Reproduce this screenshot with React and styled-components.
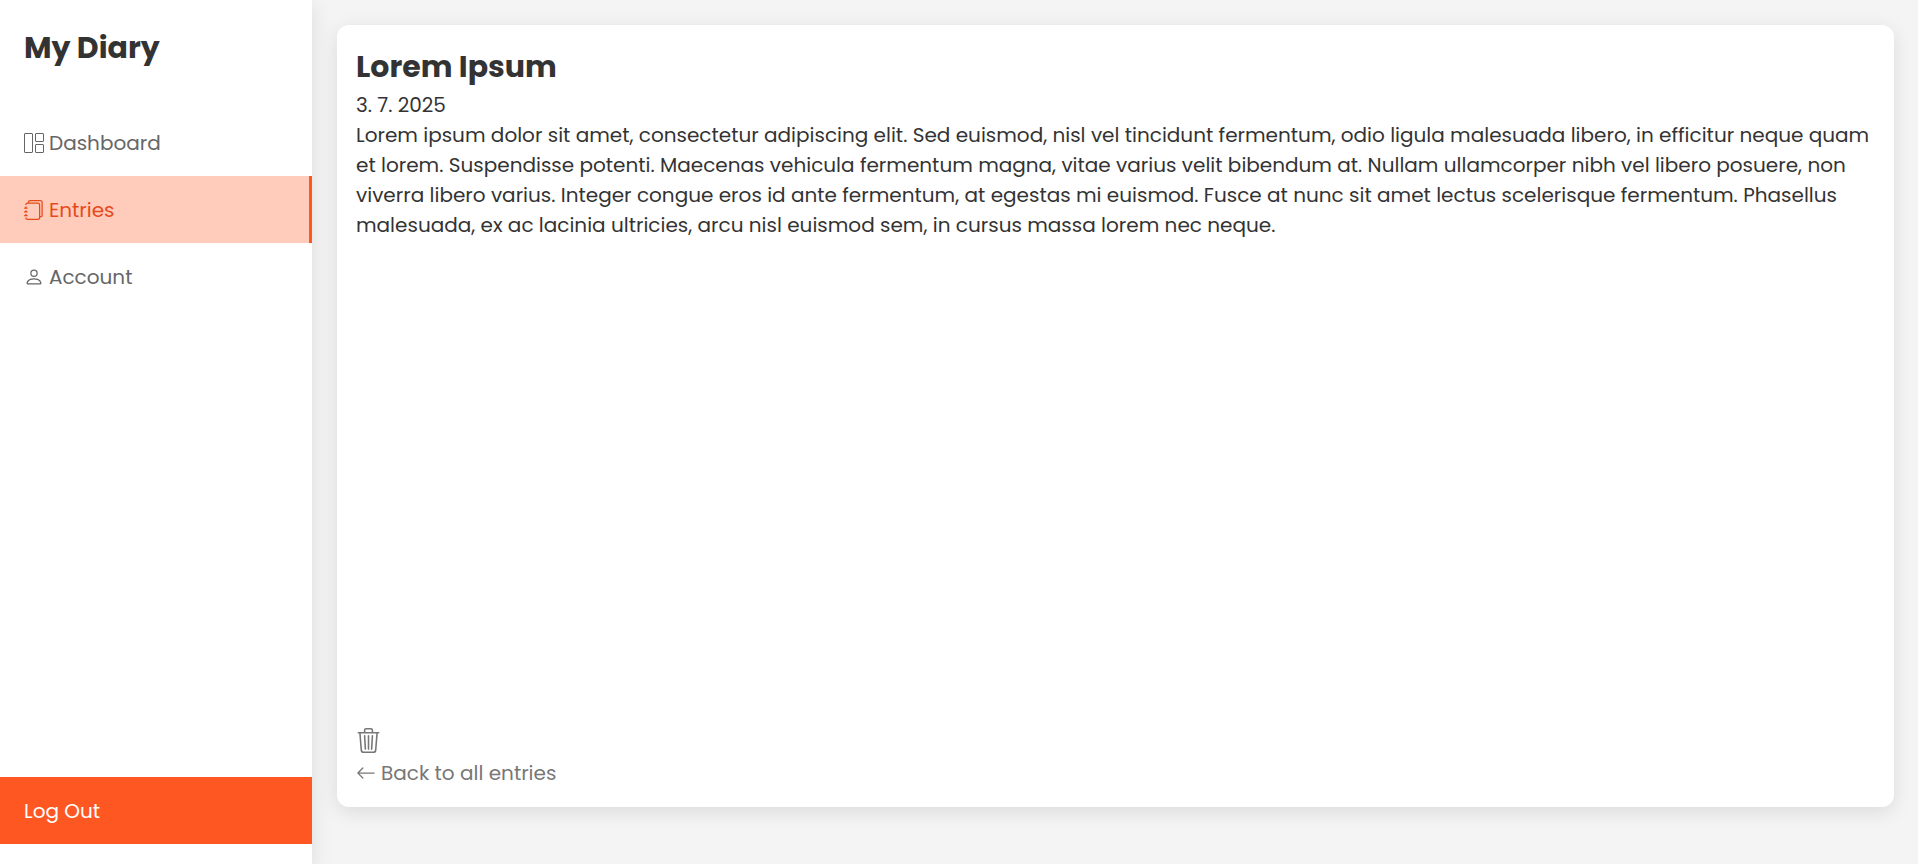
import React from "react";
import styled, { createGlobalStyle } from "styled-components";
import { BsJournals, BsPerson, BsTrash3, BsArrowLeft } from "react-icons/bs";

const GlobalStyle = createGlobalStyle`
  * { box-sizing: border-box; margin: 0; padding: 0; }
  body {
    background: #f4f4f4;
    color: #333;
    font-family: Poppins, Inter, "Liberation Sans", sans-serif;
    font-size: 20px;
    line-height: 30px;
  }
`;

const Page = styled.div`
  display: flex;
  min-height: 100vh;
`;

const Sidebar = styled.aside`
  display: flex;
  flex-direction: column;
  flex: 0 0 312px;
  padding: 25px 0 20px;
  background: #fff;
  box-shadow: 0 5px 20px rgba(0, 0, 0, 0.1);
`;

const Brand = styled.h1`
  padding: 0 24px;
  margin-bottom: 38px;
  font-size: 30px;
  line-height: 46px;
  font-weight: 700;
`;

const Nav = styled.nav`
  display: flex;
  flex-direction: column;
`;

const NavLink = styled.a`
  display: flex;
  align-items: center;
  gap: 5px;
  height: 67px;
  padding: 0 24px;
  color: ${(p) => (p.$active ? "#e64a19" : "#666")};
  background: ${(p) => (p.$active ? "#ffccbc" : "transparent")};
  border-right: 3px solid ${(p) => (p.$active ? "#ff5722" : "transparent")};
  text-decoration: none;
`;

const LogOut = styled.button`
  height: 67px;
  margin-top: auto;
  padding: 0 24px;
  border: 0;
  background: #ff5722;
  color: #fff;
  font: inherit;
  text-align: left;
  cursor: pointer;
`;

const Main = styled.main`
  display: flex;
  flex: 1;
  min-width: 0;
  padding: 25px 24px 57px 25px;
`;

const Card = styled.article`
  display: flex;
  flex-direction: column;
  flex: 1;
  padding: 19px;
  border-radius: 12px;
  background: #fff;
  box-shadow: 0 5px 20px rgba(0, 0, 0, 0.1);
`;

const Title = styled.h2`
  font-size: 30px;
  line-height: 46px;
  font-weight: 700;
`;

const Actions = styled.footer`
  display: flex;
  flex-direction: column;
  align-items: flex-start;
  gap: 5px;
  margin-top: auto;
  color: #777;
`;

const DeleteButton = styled.button`
  display: flex;
  border: 0;
  background: none;
  color: inherit;
  cursor: pointer;
`;

const BackLink = styled.a`
  display: flex;
  align-items: center;
  gap: 5px;
  color: inherit;
  text-decoration: none;
`;

const DashboardIcon = () => (
  <svg width="20" height="20" viewBox="0 0 20 20" fill="none" stroke="currentColor" aria-hidden="true">
    <rect x="0.5" y="0.5" width="8" height="19" rx="0.5" />
    <rect x="11.5" y="0.5" width="8" height="8" rx="0.5" />
    <rect x="11.5" y="11.5" width="8" height="8" rx="0.5" />
  </svg>
);

const items = [
  { label: "Dashboard", icon: <DashboardIcon /> },
  { label: "Entries", icon: <BsJournals size={20} />, active: true },
  { label: "Account", icon: <BsPerson size={20} /> },
];

export default function App() {
  return (
    <>
      <GlobalStyle />
      <Page>
        <Sidebar>
          <Brand>My Diary</Brand>
          <Nav>
            {items.map((item) => (
              <NavLink key={item.label} href="#" $active={item.active} aria-current={item.active ? "page" : undefined}>
                {item.icon}
                {item.label}
              </NavLink>
            ))}
          </Nav>
          <LogOut type="button">Log Out</LogOut>
        </Sidebar>
        <Main>
          <Card>
            <Title>Lorem Ipsum</Title>
            <time dateTime="2025-07-03">3. 7. 2025</time>
            <p>
              Lorem ipsum dolor sit amet, consectetur adipiscing elit. Sed euismod, nisl vel tincidunt fermentum, odio
              ligula malesuada libero, in efficitur neque quam et lorem. Suspendisse potenti. Maecenas vehicula
              fermentum magna, vitae varius velit bibendum at. Nullam ullamcorper nibh vel libero posuere, non viverra
              libero varius. Integer congue eros id ante fermentum, at egestas mi euismod. Fusce at nunc sit amet
              lectus scelerisque fermentum. Phasellus malesuada, ex ac lacinia ultricies, arcu nisl euismod sem, in
              cursus massa lorem nec neque.
            </p>
            <Actions>
              <DeleteButton type="button" aria-label="Delete entry">
                <BsTrash3 size={25} />
              </DeleteButton>
              <BackLink href="#">
                <BsArrowLeft size={20} />
                Back to all entries
              </BackLink>
            </Actions>
          </Card>
        </Main>
      </Page>
    </>
  );
}
